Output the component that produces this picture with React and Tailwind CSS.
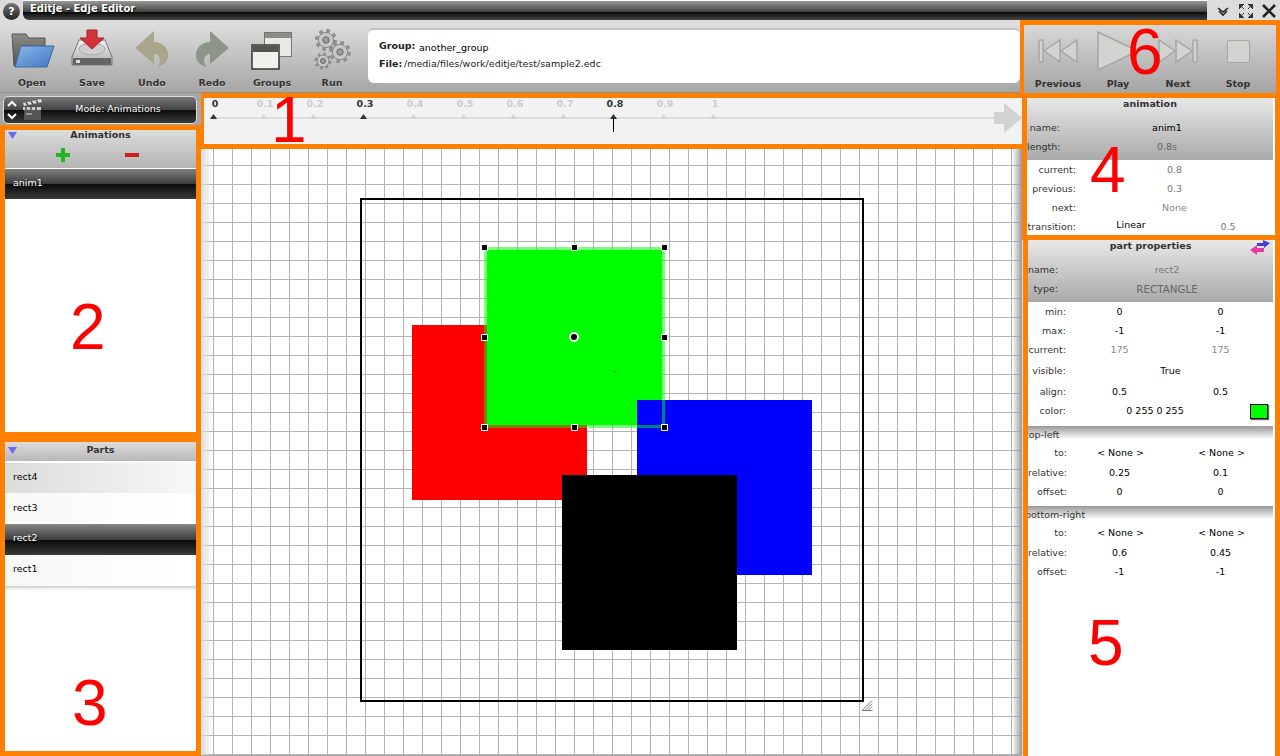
const tools = [
  { label: 'Open', icon: <FolderIcon /> },
  { label: 'Save', icon: <SaveIcon /> },
  { label: 'Undo', icon: <ArrowIcon color="#a9a68c" /> },
  { label: 'Redo', icon: <ArrowIcon color="#8b9689" flip /> },
  { label: 'Groups', icon: <GroupsIcon /> },
  { label: 'Run', icon: <GearsIcon /> },
]
const ticks = ['0', '0.1', '0.2', '0.3', '0.4', '0.5', '0.6', '0.7', '0.8', '0.9', '1']
const marked = ['0', '0.3', '0.8']
const handles = [
  'left-[277px] top-[95px]', 'left-[367px] top-[95px]', 'left-[457px] top-[95px]',
  'left-[277px] top-[185px]', 'left-[457px] top-[185px]',
  'left-[277px] top-[275px]', 'left-[367px] top-[275px]', 'left-[457px] top-[275px]',
]

function FolderIcon() {
  return (
    <svg width="46" height="44" viewBox="0 0 46 44">
      <defs>
        <linearGradient id="fb" x1="0" y1="0" x2="0" y2="1"><stop offset="0" stopColor="#8a8a86" /><stop offset="1" stopColor="#55554f" /></linearGradient>
        <linearGradient id="ff" x1="0" y1="0" x2="1" y2="1"><stop offset="0" stopColor="#8db6e6" /><stop offset="1" stopColor="#3f78c4" /></linearGradient>
      </defs>
      <path d="M3 6 H17 L20 10 H36 V18 H12 L9 38 H5 Z" fill="url(#fb)" stroke="#555" />
      <path d="M12 18 H45 L38 39 H6 Z" fill="url(#ff)" stroke="#3c6aa8" />
    </svg>
  )
}

function SaveIcon() {
  return (
    <svg width="46" height="44" viewBox="0 0 46 44">
      <defs>
        <linearGradient id="sd" x1="0" y1="0" x2="0" y2="1"><stop offset="0" stopColor="#f4f4f4" /><stop offset="1" stopColor="#a8a8a8" /></linearGradient>
      </defs>
      <path d="M10 12 H36 L43 29 V37 H3 V29 Z" fill="url(#sd)" stroke="#777" />
      <rect x="4" y="30" width="38" height="7" fill="#666" />
      <rect x="7" y="32" width="4" height="3" fill="#ddd" />
      <ellipse cx="23" cy="21" rx="13" ry="6" fill="#cfcfcf" stroke="#aaa" />
      <path d="M18 2 H28 V10 H35 L23 21 L11 10 H18 Z" fill="#d3323a" stroke="#a82228" />
    </svg>
  )
}

function ArrowIcon({ color, flip }) {
  return (
    <svg width="34" height="37" viewBox="0 0 34 37" className={flip ? '-scale-x-100' : ''}>
      <path d="M0 17 L19 0 V11 C28 11 34 18 33 26 C32 31 28 35 22 36 C25 33 26 29 24 26 C23 24 21 23 19 23 V33 Z" fill={color} />
    </svg>
  )
}

function GroupsIcon() {
  return (
    <svg width="44" height="40" viewBox="0 0 44 40">
      <rect x="14.5" y="2.5" width="27" height="24" fill="#e8e8e4" stroke="#777" />
      <rect x="15" y="3" width="26" height="5" fill="#8d8d88" />
      <rect x="2" y="15" width="27" height="24" fill="#f0f0ec" stroke="#333" strokeWidth="1.5" />
      <rect x="3" y="16" width="25" height="6" fill="#55554f" />
    </svg>
  )
}

function Gear({ cx, cy, r }) {
  const tooth = (2 * Math.PI * r) / 16
  return (
    <g>
      <circle cx={cx} cy={cy} r={r} fill="none" stroke="#8f8f8f" strokeWidth={r * 0.45} strokeDasharray={`${tooth} ${tooth}`} />
      <circle cx={cx} cy={cy} r={r * 0.85} fill="#c8c8c8" stroke="#858585" />
      <circle cx={cx} cy={cy} r={r * 0.36} fill="#9a9a9a" stroke="#6c6c6c" />
    </g>
  )
}

function GearsIcon() {
  return (
    <svg width="38" height="42" viewBox="0 0 38 42">
      <Gear cx={13} cy={11} r={9} />
      <Gear cx={27} cy={23} r={9} />
      <Gear cx={10} cy={32} r={7} />
    </svg>
  )
}

function Previous({ flip }) {
  return (
    <svg width="40" height="24" viewBox="0 0 40 24" className={flip ? '-scale-x-100' : ''}>
      <g fill="#d3d3d1" stroke="#a6a6a6" strokeWidth="1.5">
        <rect x="1" y="1" width="4" height="22" rx="1" />
        <path d="M6 12 L22 1 V23 Z" />
        <path d="M23 12 L39 1 V23 Z" />
      </g>
    </svg>
  )
}

function TriangleDown({ top }) {
  return <svg width="9" height="7" viewBox="0 0 9 7" className={`absolute left-[3px] ${top}`}><path d="M0 0 H9 L4.5 7 Z" fill="#6a6ae6" /></svg>
}

function Tick({ value }) {
  const on = marked.includes(value)
  return (
    <div className="w-[50px] flex flex-col items-center">
      <span className={`h-[10px] leading-[11px] font-bold text-[9.5px] ${on ? 'text-[#333]' : 'text-[#ccc]'}`}>{value}</span>
      <svg width="7" height="5" viewBox="0 0 7 5" className="mt-[6px] -ml-[4px]"><path d="M0 5 L3.5 0 L7 5 Z" fill={on ? '#333' : '#d2d2d2'} /></svg>
    </div>
  )
}

function PanelTitle({ title, cls = 'leading-[12px]' }) {
  return <div className={`h-[14px] text-center font-bold text-[9.5px] text-[#333] ${cls}`}>{title}</div>
}

function HeaderRow({ label, value, tone, labelW, valueW }) {
  return (
    <div className="h-[19px] flex items-center">
      <span className={`${labelW} shrink-0 text-right text-[#333] whitespace-nowrap`}>{label}</span>
      <span className={`${valueW} shrink-0 text-center ${tone}`}>{value}</span>
    </div>
  )
}

function Row({ label, a, b, tone = 'text-black', labelW = 'w-[38px]', offset = 'ml-[3px]', h = 'h-[19px]' }) {
  return (
    <div className={`${h} flex items-center`}>
      <span className={`${labelW} text-right text-[#333] whitespace-nowrap`}>{label}</span>
      <span className={`w-[101px] ${offset} text-center ${tone}`}>{a}</span>
      <span className={`w-[101px] text-center ${tone}`}>{b}</span>
    </div>
  )
}

function Section({ title, rows }) {
  return (
    <div>
      <div className="h-[13px] -ml-[3px] mr-[2px] pt-[3px] leading-[12px] text-[#333] bg-linear-to-b from-[#999] to-white">{title}</div>
      <div className="h-[23px] flex items-center pt-[6px]">
        <span className="w-[39px] text-right text-[#333]">to:</span>
        <span className="w-[101px] ml-[3px] text-center text-black">{'< None >'}</span>
        <span className="w-[101px] text-center text-black">{'< None >'}</span>
      </div>
      <div className="mt-[2px]">
        {rows.map((r) => (
          <Row key={r[0]} label={r[0]} a={r[1]} b={r[2]} labelW="w-[39px]" offset="ml-[2px]" />
        ))}
      </div>
    </div>
  )
}

function ListItem({ name, dark, h = 'h-[30px]', pt = 'pt-[8px]', tone = 'bg-linear-to-r from-[#f8f8f8] to-white' }) {
  if (dark) {
    return (
      <div className={`${h} ${pt} pl-[8px] leading-[12px] text-white [text-shadow:1px_1px_2px_#000] bg-[linear-gradient(#808080,#3c3c3c_50%,#0a0a0a_50%,#3a3a3a)]`}>{name}</div>
    )
  }
  return <div className={`${h} ${pt} pl-[8px] leading-[12px] text-black ${tone}`}>{name}</div>
}

export default function App() {
  return (
    <div className="relative w-[1280px] h-[756px] overflow-hidden bg-[#dcdcdc] text-[9.5px] font-['DejaVu_Sans',sans-serif]">
      {/* title bar */}
      <div className="h-[20px] flex">
        <div className="w-[23px] flex items-center justify-center">
          <div className="w-[17px] h-[17px] mt-[3px] rounded-full bg-[linear-gradient(#777,#222)] text-white text-[11px] font-bold text-center leading-[17px]">?</div>
        </div>
        <div className="w-[1184px] border-t border-white rounded-bl-md pl-[7px] pt-[1px] leading-[13px] font-bold text-[10px] text-white [text-shadow:1px_1px_1px_#000] bg-[linear-gradient(#999,#444_55%,#0c0c0c_60%,#444)]">Editje - Edje Editor</div>
        <div className="flex-1 flex items-center pl-[9px] pt-[2px] gap-[9px]">
          <svg width="14" height="14" viewBox="0 0 14 14"><path d="M2 4 L7 8 L12 4 M3 7 L7 11 L11 7" fill="none" stroke="#222" strokeWidth="1.6" /></svg>
          <svg width="14" height="14" viewBox="0 0 14 14"><path d="M0 0 H5 L0 5 Z M14 0 H9 L14 5 Z M0 14 H5 L0 9 Z M14 14 H9 L14 9 Z M3 3 L5 5 M11 3 L9 5 M3 11 L5 9 M11 11 L9 9" fill="#333" stroke="#333" /></svg>
          <svg width="14" height="14" viewBox="0 0 14 14"><path d="M1 1 L13 13 M13 1 L1 13" fill="none" stroke="#222" strokeWidth="2.6" /></svg>
        </div>
      </div>

      <div className="flex h-[736px]">
        <div className="w-[1022px] flex flex-col">
          {/* toolbar */}
          <div className="h-[73px] pt-[3px] bg-[#dcdcdc]">
            <div className="h-[70px] flex pl-[2px] bg-linear-to-b from-[#dedede] to-[#a6a6a6] border-b border-[#8c8c8c]">
              {tools.map((t) => (
                <div key={t.label} className="w-[60px] flex flex-col items-center">
                  <div className="h-[50px] flex items-center justify-center pt-[3px]">{t.icon}</div>
                  <span className="mt-[3px] font-bold text-[#333] [text-shadow:0_1px_0_#c8c8c8]">{t.label}</span>
                </div>
              ))}
              <div className="w-[652px] h-[55px] mt-[5px] ml-[6px] rounded-md bg-white border-t-2 border-[#c4c4c4] pl-[11px] pt-[9px] text-[#222]">
                <div className="flex h-[18px]">
                  <span className="font-bold w-[40px]">Group:</span>
                  <span className="pt-[2px] text-black">another_group</span>
                </div>
                <div className="flex">
                  <span className="font-bold w-[25px]">File:</span>
                  <span>/media/files/work/editje/test/sample2.edc</span>
                </div>
              </div>
            </div>
          </div>

          <div className="flex flex-1 min-h-0">
            {/* left column */}
            <div className="w-[201px] flex flex-col">
              <div className="h-[32px] bg-[#a6a6a6] pt-[3px] pl-[3px]">
                <div className="relative w-[194px] h-[28px] rounded-[5px] border border-[#ddd] text-white text-center pl-[36px] pt-[6px] leading-[12px] [text-shadow:1px_1px_2px_#000] bg-[linear-gradient(#777,#444_50%,#0c0c0c_50%,#3a3a3a)]">
                  Mode: Animations
                  <svg width="10" height="22" viewBox="0 0 10 22" className="absolute left-[3px] top-[2px]"><path d="M1 7 L5 3 L9 7 M1 15 L5 19 L9 15" fill="none" stroke="#fff" strokeWidth="2" /></svg>
                  <svg width="20" height="22" viewBox="0 0 20 22" className="absolute left-[18px] top-[2px]">
                    <path d="M1 4 L19 0 L20 3 L2 7 Z" fill="#ddd" />
                    <path d="M4 3.5 L6 6 M9 2.5 L11 5 M14 1.5 L16 4" stroke="#444" strokeWidth="1.4" />
                    <rect x="1" y="8" width="18" height="3" fill="#ccc" />
                    <path d="M4 8 V11 M9 8 V11 M14 8 V11" stroke="#444" strokeWidth="1.4" />
                    <rect x="2" y="11" width="17" height="10" fill="#555" />
                    <rect x="4" y="14" width="6" height="2" fill="#999" />
                  </svg>
                </div>
              </div>
              <div className="h-[312px] border-[5px] bg-white border-[#ff8000] flex flex-col">
                <div className="relative h-[38px] bg-linear-to-b from-[#dcdcdc] to-[#b4b4b4]">
                  <TriangleDown top="top-[2px]" />
                  <PanelTitle title="Animations" cls="leading-[10px]" />
                  <div className="flex h-[22px] items-center pl-[51px] gap-[55px]">
                    <svg width="14" height="14" viewBox="0 0 14 14"><path d="M5 0 H9 V5 H14 V9 H9 V14 H5 V9 H0 V5 H5 Z" fill="#22b522" /></svg>
                    <svg width="14" height="4" viewBox="0 0 14 4"><rect width="14" height="4" fill="#cc1f1f" /></svg>
                  </div>
                </div>
                <div className="h-px bg-white" />
                <ListItem name="anim1" dark />
              </div>
              <div className="flex-1 -mt-[5px] pt-[5px]">
                <div className="h-[319px] border-[5px] bg-white border-[#ff8000] flex flex-col">
                  <div className="relative h-[19px] pt-[2px] bg-linear-to-b from-[#dcdcdc] to-[#b8b8b8]">
                    <TriangleDown top="top-[5px]" />
                    <PanelTitle title="Parts" />
                  </div>
                  <div className="h-[2px] bg-white" />
                  <ListItem name="rect4" tone="bg-linear-to-r from-[#dcdcdc] to-[#f8f8f8]" />
                  <ListItem name="rect3" h="h-[31px]" pt="pt-[9px]" />
                  <div className="h-px bg-[#888]" />
                  <ListItem name="rect2" dark pt="pt-[7px]" />
                  <div className="h-px bg-white" />
                  <ListItem name="rect1" pt="pt-[7px]" />
                  <div className="h-[4px] bg-linear-to-b from-[#ccc] to-white" />
                </div>
              </div>
            </div>

            {/* timeline and canvas */}
            <div className="flex-1 flex flex-col min-w-0">
              <div className="relative h-[56px] bg-[#f2f2f2] border-y-[5px] border-l-[3px] border-[#ff8000]">
                <div className="absolute left-[9px] right-[24px] top-[19px] h-[2px] bg-[#ddd]" />
                <div className="relative flex -ml-[14px]">
                  {ticks.map((t) => (
                    <Tick key={t} value={t} />
                  ))}
                </div>
                <svg width="28" height="30" viewBox="0 0 28 30" className="absolute right-0 top-[5px]"><path d="M0 9 H10 V0 L28 15 L10 30 V21 H0 Z" fill="#d2d2d2" /></svg>
                <div className="absolute left-[409px] top-[20px] w-px h-[14px] bg-black" />
              </div>
              <div className="relative flex-1 overflow-hidden bg-white bg-[linear-gradient(#b3b3b3_1px,transparent_1px),linear-gradient(90deg,#b3b3b3_1px,transparent_1px)] bg-[size:19px_19px] bg-[position:12px_16px]">
                <div className="absolute left-0 top-0 bottom-0 w-[12px] bg-linear-to-r from-[#ddd] to-transparent" />
                <div className="absolute right-0 top-0 bottom-0 w-[10px] bg-linear-to-l from-[#999] to-transparent" />
                <div className="absolute left-0 right-0 bottom-0 h-px bg-[#aaa]" />
                <div className="absolute inset-y-0 left-[3px] right-0">
                  <div className="absolute left-[156px] top-[49px] w-[504px] h-[504px] border-2 border-black" />
                  <svg width="11" height="11" viewBox="0 0 11 11" className="absolute left-[658px] top-[551px]">
                    <path d="M0 10.5 L10 0.5 M3 10.5 L10 3.5 M6 10.5 L10 6.5 M0 10.5 H10.5" stroke="#777" fill="none" />
                  </svg>
                  <div className="absolute left-[208px] top-[176px] w-[175px] h-[175px] bg-[#ff0000]" />
                  <div className="absolute left-[283px] top-[101px] w-[175px] h-[175px] bg-[#00ff00]" />
                  <div className="absolute left-[433px] top-[251px] w-[175px] h-[175px] bg-[#0000ff]" />
                  <div className="absolute left-[358px] top-[326px] w-[175px] h-[175px] bg-black" />
                  <div className="absolute left-[280px] top-[98px] w-[181px] h-[181px] border-[3px] border-[#00ff0080]" />
                  {handles.map((c) => (
                    <div key={c} className={`absolute w-[7px] h-[7px] bg-black border border-white ${c}`} />
                  ))}
                  <div className="absolute left-[365px] top-[183px] w-[10px] h-[10px] rounded-full bg-black border-2 border-white" />
                  <div className="absolute left-[410px] top-[222px] w-px h-px bg-black" />
                </div>
              </div>
            </div>
          </div>
        </div>

        {/* right column */}
        <div className="w-[258px] flex flex-col">
          <div className="-ml-[2px] w-[260px] h-[78px] border-y-[5px] border-x-[4px] border-[#ff8000] bg-linear-to-b from-[#d8d8d8] to-[#a4a4a4] flex">
            <div className="w-[68px] flex flex-col items-center">
              <div className="h-[52px] flex items-center justify-center"><Previous /></div>
              <span className="font-bold text-[#333]">Previous</span>
            </div>
            <div className="w-[52px] flex flex-col items-center">
              <div className="h-[52px] flex items-center justify-center">
                <svg width="42" height="40" viewBox="0 0 42 40"><path d="M1 1 L41 20 L1 39 Z" fill="#d3d3d1" stroke="#a6a6a6" strokeWidth="1.5" /></svg>
              </div>
              <span className="font-bold text-[#333]">Play</span>
            </div>
            <div className="w-[68px] flex flex-col items-center">
              <div className="h-[52px] flex items-center justify-center"><Previous flip /></div>
              <span className="font-bold text-[#333]">Next</span>
            </div>
            <div className="w-[52px] flex flex-col items-center">
              <div className="h-[52px] flex items-center justify-center">
                <div className="w-[23px] h-[23px] rounded-[2px] bg-[#d3d3d1] border border-[#a6a6a6]" />
              </div>
              <span className="font-bold text-[#333]">Stop</span>
            </div>
          </div>

          <div className="h-[142px] border-[5px] border-t-0 border-[#ff8000] bg-white overflow-hidden text-[#444]">
            <div className="h-[62px] bg-linear-to-b from-[#e8e8e8] to-[#aaa] mr-[2px]">
              <PanelTitle title="animation" />
              <div className="pt-[7px]">
                <HeaderRow label="name:" value="anim1" tone="text-black" labelW="w-[33px]" valueW="w-[214px]" />
                <HeaderRow label="length:" value="0.8s" tone="text-[#666]" labelW="w-[33px]" valueW="w-[214px]" />
              </div>
            </div>
            <div className="mt-[1px]">
              <div className="h-[19px] flex items-center"><span className="w-[49px] text-right text-[#333]">current:</span><span className="w-[197px] text-center text-[#777]">0.8</span></div>
              <div className="h-[19px] flex items-center"><span className="w-[49px] text-right text-[#333]">previous:</span><span className="w-[197px] text-center text-[#777]">0.3</span></div>
              <div className="h-[19px] flex items-center"><span className="w-[49px] text-right text-[#333]">next:</span><span className="w-[197px] text-center text-[#888]">None</span></div>
              <div className="h-[19px] flex items-center">
                <span className="w-[49px] text-right text-[#333]">transition:</span>
                <span className="w-[110px] text-center text-black -mt-[4px]">Linear</span>
                <span className="w-[84px] text-center text-[#777]">0.5</span>
              </div>
            </div>
          </div>

          <div className="flex-1 ml-px border-x-[5px] border-[#ff8000] bg-white overflow-hidden">
            <div className="relative h-[62px] mr-[2px] bg-linear-to-b from-[#e8e8e8] to-[#aaa]">
              <PanelTitle title="part properties" />
              <svg width="21" height="16" viewBox="0 0 21 16" className="absolute right-[2px] top-0">
                <path d="M7 3 H13 V0 L20 3 L14 8 V6 H7 Z" fill="#4040e0" />
                <path d="M14 8 H7 V5 L0 10 L7 15 V12 H14 Z" fill="#e83ca8" />
              </svg>
              <div className="pt-[7px]">
                <HeaderRow label="name:" value="rect2" tone="text-[#777]" labelW="w-[30px]" valueW="w-[218px]" />
                <HeaderRow label="type:" value="RECTANGLE" tone="text-[#666] text-[10.3px]" labelW="w-[30px]" valueW="w-[218px]" />
              </div>
            </div>
            <div className="h-px" />
            <Row label="min:" a="0" b="0" />
            <Row label="max:" a="-1" b="-1" />
            <Row label="current:" a="175" b="175" tone="text-[#888]" />
            <div className="h-[22px] flex items-center">
              <span className="w-[38px] text-right text-[#333]">visible:</span>
              <span className="w-[210px] text-center text-black">True</span>
            </div>
            <Row label="align:" a="0.5" b="0.5" h="h-[20px]" />
            <div className="h-[19px] flex items-center">
              <span className="w-[38px] text-right text-[#333]">color:</span>
              <span className="w-[178px] text-center text-black">0 255 0 255</span>
              <span className="w-[18px] h-[15px] ml-[6px] bg-[#00ff00] border border-black shadow-[1px_1px_1px_#666]" />
            </div>
            <div className="h-[5px]" />
            <Section title="top-left" rows={[['relative:', '0.25', '0.1'], ['offset:', '0', '0']]} />
            <div className="h-[4px]" />
            <Section title="bottom-right" rows={[['relative:', '0.6', '0.45'], ['offset:', '-1', '-1']]} />
          </div>
        </div>
      </div>

      {/* red callout numbers on top of the screenshot */}
      <div className="absolute inset-0 z-20 pointer-events-none text-[#ff0000] text-[64px] leading-[64px] font-['Liberation_Sans',sans-serif]">
        <span className="absolute left-[271px] top-[88px]">1</span>
        <span className="absolute left-[70px] top-[295px]">2</span>
        <span className="absolute left-[72px] top-[671px]">3</span>
        <span className="absolute left-[1090px] top-[138px]">4</span>
        <span className="absolute left-[1088px] top-[611px]">5</span>
        <span className="absolute left-[1127px] top-[20px]">6</span>
      </div>
    </div>
  )
}
